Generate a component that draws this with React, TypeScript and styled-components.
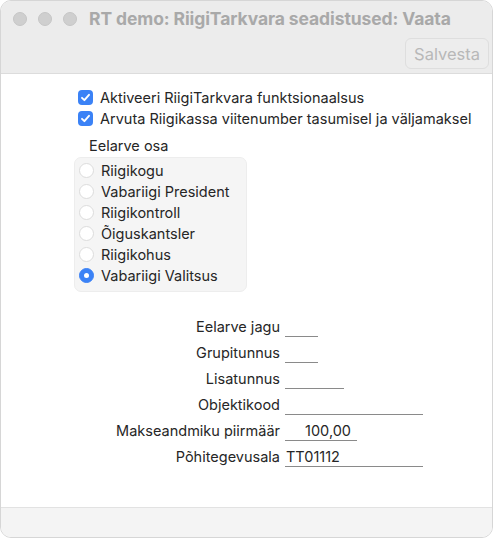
import React from "react";
import styled, { createGlobalStyle } from "styled-components";

const Global = createGlobalStyle`
  html, body { margin: 0; padding: 0; background: #ffffff; }
  body { font-family: Inter, "Noto Sans", "Liberation Sans", sans-serif; -webkit-font-smoothing: antialiased; }
  * { box-sizing: border-box; }
`;

const Window = styled.div`
  width: 493px;
  height: 538px;
  display: flex;
  flex-direction: column;
  border-radius: 11px;
  overflow: hidden;
  background: #ffffff;
  border: 1px solid #d6d6d6;
`;

const Header = styled.div`
  height: 73px;
  background: #ececec;
  border-bottom: 1px solid #dcdcdc;
  display: flex;
  flex-direction: column;
`;

const TitleBar = styled.div`
  height: 35px;
  display: flex;
  align-items: center;
  padding-left: 12px;
  gap: 12px;
`;

const Lights = styled.div`
  display: flex;
  gap: 11px;
`;

const Light = styled.span`
  width: 14px;
  height: 14px;
  border-radius: 50%;
  background: #cfcfcf;
  border: 1px solid #c6c6c6;
`;

const Title = styled.div`
  font-weight: 700;
  font-size: 17.5px;
  color: #a9a9a9;
  letter-spacing: -0.1px;
`;

const Toolbar = styled.div`
  flex: 1;
  display: flex;
  justify-content: flex-end;
  align-items: flex-start;
  padding: 2px 3px 0 0;
`;

const Button = styled.button`
  height: 31px;
  padding: 0 8px;
  border: 1px solid #dedede;
  border-radius: 6px;
  background: #ededed;
  color: #b8b8b8;
  font-family: inherit;
  font-size: 16.5px;
`;

const Content = styled.div`
  flex: 1;
  display: flex;
  flex-direction: column;
  color: #262626;
  font-size: 14.5px;
  padding-top: 15px;
`;

const CheckList = styled.div`
  display: flex;
  flex-direction: column;
  gap: 5px;
  padding-left: 77px;
`;

const CheckRow = styled.label`
  display: flex;
  align-items: center;
  gap: 7px;
  height: 16px;
`;

const CheckBox = styled.span`
  width: 15px;
  height: 15px;
  border-radius: 4px;
  background: #3b82f6;
  display: flex;
  align-items: center;
  justify-content: center;
`;

const GroupLabel = styled.div`
  padding-left: 88px;
  margin-top: 11px;
  height: 17px;
  display: flex;
  align-items: center;
`;

const RadioBox = styled.div`
  margin: 3px 0 0 73px;
  width: 173px;
  background: #f5f5f5;
  border: 1px solid #ededed;
  border-radius: 7px;
  padding: 4px 0 7px 4px;
  display: flex;
  flex-direction: column;
  gap: 4px;
`;

const RadioRow = styled.div`
  display: flex;
  align-items: center;
  gap: 7px;
  height: 17px;
`;

const Radio = styled.span<{ $on?: boolean }>`
  width: 15px;
  height: 15px;
  border-radius: 50%;
  background: ${(p) => (p.$on ? "#3b82f6" : "#ffffff")};
  border: 1px solid ${(p) => (p.$on ? "#3b82f6" : "#dcdcdc")};
  display: flex;
  align-items: center;
  justify-content: center;
  &::after {
    content: "";
    display: ${(p) => (p.$on ? "block" : "none")};
    width: 5px;
    height: 5px;
    border-radius: 50%;
    background: #ffffff;
  }
`;

const Form = styled.div`
  margin-top: 26px;
  display: grid;
  grid-template-columns: 279px auto;
  column-gap: 5px;
  row-gap: 7px;
  justify-content: start;
`;

const FieldLabel = styled.div`
  text-align: right;
  height: 19px;
  line-height: 18px;
`;

const Field = styled.div<{ $w: number; $right?: boolean }>`
  width: ${(p) => p.$w}px;
  height: 19px;
  line-height: 18px;
  border-bottom: 1px solid #8a8a8a;
  text-align: ${(p) => (p.$right ? "right" : "left")};
  padding: 0 ${(p) => (p.$right ? 6 : 1)}px 0 1px;
`;

const Footer = styled.div`
  height: 30px;
  background: #f4f4f4;
  border-top: 1px solid #e2e2e2;
`;

const Check = () => (
  <svg width="11" height="11" viewBox="0 0 11 11">
    <path d="M2 5.8 L4.4 8.2 L9 2.8" fill="none" stroke="#fff" strokeWidth="1.9" strokeLinecap="round" strokeLinejoin="round" />
  </svg>
);

const radios = ["Riigikogu", "Vabariigi President", "Riigikontroll", "Õiguskantsler", "Riigikohus", "Vabariigi Valitsus"];

const fields: { label: string; w: number; value?: string; right?: boolean }[] = [
  { label: "Eelarve jagu", w: 33 },
  { label: "Grupitunnus", w: 33 },
  { label: "Lisatunnus", w: 59 },
  { label: "Objektikood", w: 138 },
  { label: "Makseandmiku piirmäär", w: 72, value: "100,00", right: true },
  { label: "Põhitegevusala", w: 138, value: "TT01112" },
];

export default function App() {
  return (
    <>
      <Global />
      <Window>
        <Header>
          <TitleBar>
            <Lights>
              <Light />
              <Light />
              <Light />
            </Lights>
            <Title>RT demo: RiigiTarkvara seadistused: Vaata</Title>
          </TitleBar>
          <Toolbar>
            <Button>Salvesta</Button>
          </Toolbar>
        </Header>
        <Content>
          <CheckList>
            <CheckRow>
              <CheckBox><Check /></CheckBox>
              Aktiveeri RiigiTarkvara funktsionaalsus
            </CheckRow>
            <CheckRow>
              <CheckBox><Check /></CheckBox>
              Arvuta Riigikassa viitenumber tasumisel ja väljamaksel
            </CheckRow>
          </CheckList>
          <GroupLabel>Eelarve osa</GroupLabel>
          <RadioBox>
            {radios.map((r, i) => (
              <RadioRow key={r}>
                <Radio $on={i === radios.length - 1} />
                {r}
              </RadioRow>
            ))}
          </RadioBox>
          <Form>
            {fields.map((f) => (
              <React.Fragment key={f.label}>
                <FieldLabel>{f.label}</FieldLabel>
                <Field $w={f.w} $right={f.right}>{f.value ?? ""}</Field>
              </React.Fragment>
            ))}
          </Form>
        </Content>
        <Footer />
      </Window>
    </>
  );
}
